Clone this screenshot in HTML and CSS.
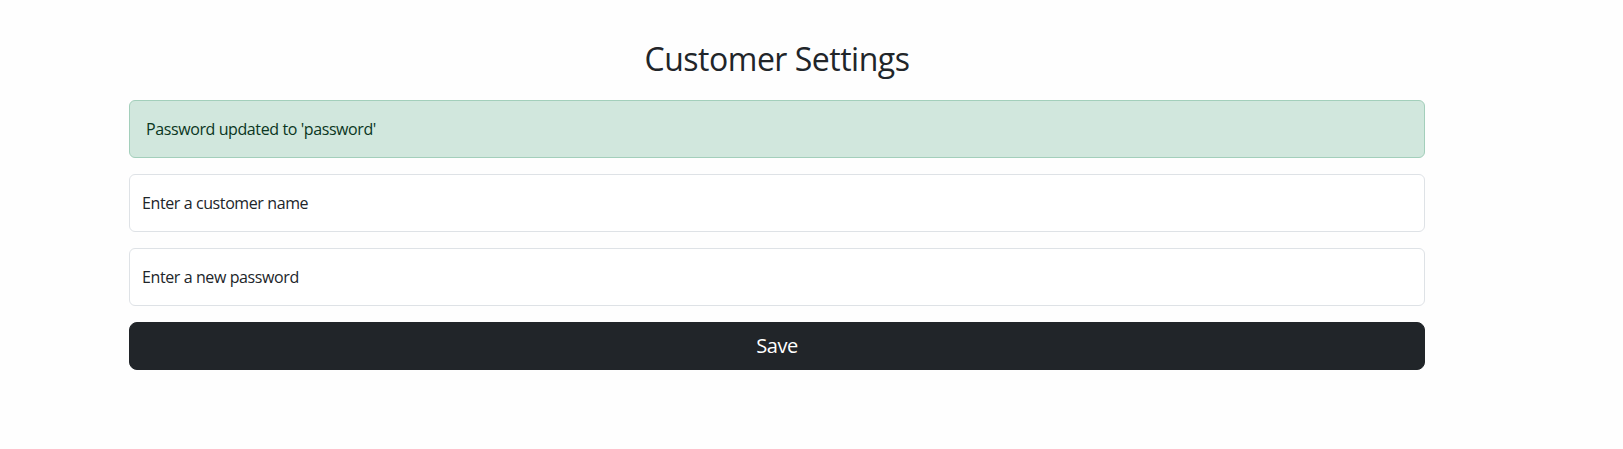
FILE: index.html
```html
<!DOCTYPE html>
<html lang="en">
<head>
<meta charset="utf-8">
<title>Customer Settings</title>
<link rel="stylesheet" href="styles.css">
</head>
<body>
<main class="container">
  <h2 class="title">Customer Settings</h2>
  <div class="alert">Password updated to 'password'</div>
  <form class="form">
    <label class="field">
      <input class="field-input" type="text" placeholder="Enter a customer name">
    </label>
    <label class="field">
      <input class="field-input" type="password" placeholder="Enter a new password">
    </label>
    <button class="btn-save" type="button">Save</button>
  </form>
</main>
</body>
</html>
```
FILE: styles.css
```css
* { box-sizing: border-box; }
html, body { margin: 0; padding: 0; }
body {
  background: #fefefe;
  color: #212529;
  font-family: "Open Sans", "Noto Sans", sans-serif;
  font-size: 16px;
  line-height: 1.5;
  letter-spacing: -0.4px;
}
.container {
  width: 1320px;
  margin-left: 117px;
  padding: 40px 12px 0;
}
.title {
  margin: 0 0 22px;
  font-size: 32px;
  font-weight: 400;
  line-height: 1.2;
  letter-spacing: -0.5px;
  text-align: center;
}
.alert {
  padding: 16px;
  margin-bottom: 16px;
  background: #d1e7dd;
  border: 1px solid #a3cfbb;
  border-radius: 6px;
  color: #0a3622;
}
.form { display: flex; flex-direction: column; gap: 16px; }
.field { display: block; }
.field-input {
  display: block;
  width: 100%;
  height: 58px;
  padding: 16px 12px;
  font: inherit;
  letter-spacing: -0.4px;
  color: #212529;
  background: #fff;
  border: 1px solid #dee2e6;
  border-radius: 6px;
  outline: none;
}
.field-input::placeholder { color: #212529; opacity: 1; }
.btn-save {
  display: block;
  width: 100%;
  height: 48px;
  padding: 8px 16px;
  font: inherit;
  font-size: 20px;
  letter-spacing: -0.4px;
  color: #fff;
  background: #212529;
  border: 1px solid #212529;
  border-radius: 8px;
}
```
